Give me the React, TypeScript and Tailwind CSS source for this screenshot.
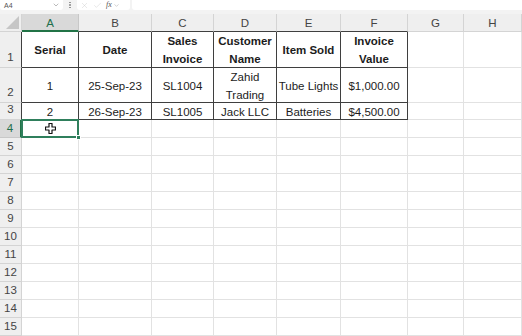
import { ChevronDown, X, Check } from "lucide-react";

const rowHeads = ["", "1", "2", "3", "4", "5", "6", "7", "8", "9", "10", "11", "12", "13", "14", "15"];
const colHeads = ["A", "B", "C", "D", "E", "F", "G", "H"];

const table: string[][] = [
  ["Serial", "Date", "Sales\nInvoice", "Customer\nName", "Item Sold", "Invoice\nValue"],
  ["1", "25-Sep-23", "SL1004", "Zahid\nTrading", "Tube Lights", "$1,000.00"],
  ["2", "26-Sep-23", "SL1005", "Jack LLC", "Batteries", "$4,500.00"],
];

function SelectCursor() {
  return (
    <svg width="11" height="11" viewBox="0 0 11 11">
      <path
        d="M4 0.5h3v3.5h3.5v3h-3.5v3.5h-3v-3.5h-3.5v-3h3.5z"
        fill="white"
        stroke="#111"
        strokeWidth="1.2"
        strokeLinejoin="round"
      />
    </svg>
  );
}

function TopBar() {
  return (
    <div className="h-[14px] bg-[#f3f3f3] flex items-start">
      <div className="w-[63px] h-[10px] bg-white rounded-b-[3px] flex items-center justify-between pl-[4px] pr-[3px]">
        <span className="text-[7px] leading-none text-[#555]">A4</span>
        <ChevronDown size={8} strokeWidth={1.5} className="text-[#777]" />
      </div>
      <div className="w-[14px] h-[10px] flex flex-col items-center justify-center gap-[1px]">
        <span className="w-[1.5px] h-[1.5px] bg-[#888] rounded-full" />
        <span className="w-[1.5px] h-[1.5px] bg-[#888] rounded-full" />
        <span className="w-[1.5px] h-[1.5px] bg-[#888] rounded-full" />
      </div>
      <div className="w-[53px] h-[10px] bg-white rounded-b-[3px] flex items-center gap-[4px] pl-[3px]">
        <X size={9} strokeWidth={1} className="text-[#c4c4c4]" />
        <Check size={9} strokeWidth={1} className="text-[#c4c4c4]" />
        <span className="text-[8px] leading-none italic text-[#555] font-['Liberation_Serif',serif]">fx</span>
        <ChevronDown size={7} strokeWidth={1.5} className="text-[#999] -ml-[3px]" />
      </div>
      <div className="flex-1 h-[10px] bg-white ml-[2px] rounded-bl-[3px]" />
    </div>
  );
}

function Corner() {
  return (
    <div className="bg-[#efefef] border-r border-b border-[#d4d4d4] flex items-end justify-end p-[2px]">
      <svg width="13" height="13" viewBox="0 0 13 13">
        <path d="M13 0V13H0Z" fill="#c6c6c6" />
      </svg>
    </div>
  );
}

function CellText({ text, bold }: { text: string; bold?: boolean }) {
  return (
    <div className={bold ? "font-bold text-center leading-[18px]" : "text-center leading-[18px]"}>
      {text.split("\n").map((line) => (
        <div key={line}>{line}</div>
      ))}
    </div>
  );
}

export default function App() {
  return (
    <div className="w-[522px] h-[336px] overflow-hidden bg-white font-['Liberation_Sans',Arial,sans-serif] text-[#1c1c1c]">
      <TopBar />
      <div className="grid grid-cols-[22px_57px_73px_62px_63px_64px_67px_56px_58px] grid-rows-[18px_36px_35px_17px_repeat(12,18px)]">
        {rowHeads.map((rh, r) => {
          if (r === 0) {
            return [
              <Corner key="corner" />,
              ...colHeads.map((ch, c) => {
                let cls =
                  "bg-[#efefef] border-r border-b border-[#d4d4d4] flex items-center justify-center pt-[2px] text-[11.5px] text-[#444]";
                if (c === 0)
                  cls =
                    "bg-[#d9d9d9] border-r border-b-2 border-r-[#c8c8c8] border-b-[#217346] flex items-center justify-center pt-[3px] text-[11.5px] text-[#1f6f4c]";
                else if (c < 6)
                  cls =
                    "bg-[#efefef] border-r border-b border-r-[#d4d4d4] border-b-[#3f3f3f] flex items-center justify-center pt-[2px] text-[11.5px] text-[#444]";
                return (
                  <div key={ch} className={cls}>
                    {ch}
                  </div>
                );
              }),
            ];
          }
          let headCls =
            "bg-[#efefef] border-r border-b border-[#d4d4d4] flex items-center justify-center text-[11.5px] text-[#444]";
          if (r <= 3)
            headCls =
              "bg-[#efefef] border-r border-b border-r-[#3f3f3f] border-b-[#d4d4d4] flex items-end justify-center pb-[1px] text-[11.5px] text-[#444]";
          if (r === 4)
            headCls =
              "bg-[#d9d9d9] border-r-2 border-b border-r-[#217346] border-b-[#c8c8c8] flex items-center justify-center text-[11.5px] text-[#1f6f4c]";
          return [
            <div key={"h" + r} className={headCls}>
              {rh}
            </div>,
            ...colHeads.map((ch, c) => {
              const inTable = r <= 3 && c < 6;
              if (inTable) {
                return (
                  <div
                    key={ch + r}
                    className="border-r border-b border-[#3f3f3f] flex items-center justify-center pt-[1px] text-[11.5px]"
                  >
                    <CellText text={table[r - 1][c]} bold={r === 1} />
                  </div>
                );
              }
              if (r === 4 && c === 0) {
                return (
                  <div
                    key={ch + r}
                    className="relative border-r border-b border-[#e2e2e2] flex items-center justify-center"
                  >
                    <div className="absolute -inset-px border-2 border-[#2f7f5c] z-10" />
                    <div className="absolute -right-[3px] -bottom-[3px] w-[5px] h-[5px] bg-[#2f7f5c] border border-white z-20" />
                    <SelectCursor />
                  </div>
                );
              }
              return <div key={ch + r} className="border-r border-b border-[#e2e2e2]" />;
            }),
          ];
        })}
      </div>
    </div>
  );
}
